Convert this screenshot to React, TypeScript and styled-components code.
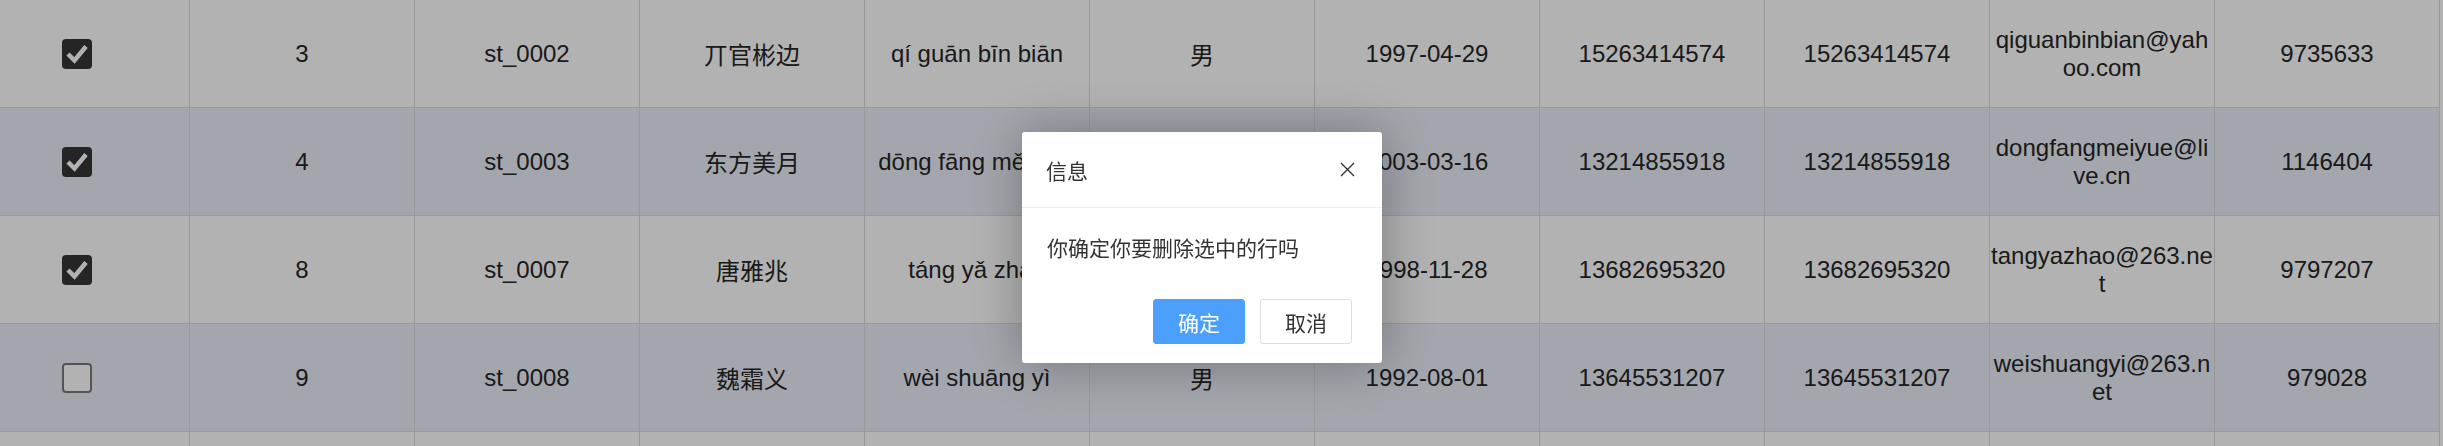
import React from 'react'
import styled, { createGlobalStyle } from 'styled-components'

const GlobalStyle = createGlobalStyle`
html, body {
    margin: 0;
    padding: 0;
    background: #fff;
    overflow: hidden;
}
body {
    font-family: "Liberation Sans", Arial, "Noto Sans CJK SC", sans-serif;
    color: #262626;
}
`;

interface Student {
    id: number;
    code: string;
    name: string;
    pinyin: string;
    gender: string;
    birthday: string;
    phone: string;
    mobile: string;
    email: string;
    qq: string;
    checked: boolean;
}

const students: Student[] = [
    { id: 3, code: 'st_0002', name: '丌官彬边', pinyin: 'qí guān bīn biān', gender: '男', birthday: '1997-04-29', phone: '15263414574', mobile: '15263414574', email: 'qiguanbinbian@yahoo.com', qq: '9735633', checked: true },
    { id: 4, code: 'st_0003', name: '东方美月', pinyin: 'dōng fāng měi yuè', gender: '女', birthday: '2003-03-16', phone: '13214855918', mobile: '13214855918', email: 'dongfangmeiyue@live.cn', qq: '1146404', checked: true },
    { id: 8, code: 'st_0007', name: '唐雅兆', pinyin: 'táng yǎ zhào', gender: '女', birthday: '1998-11-28', phone: '13682695320', mobile: '13682695320', email: 'tangyazhao@263.net', qq: '9797207', checked: true },
    { id: 9, code: 'st_0008', name: '魏霜义', pinyin: 'wèi shuāng yì', gender: '男', birthday: '1992-08-01', phone: '13645531207', mobile: '13645531207', email: 'weishuangyi@263.net', qq: '979028', checked: false },
];

const COLUMNS = 11;

const Table = styled.div`
display: flex;
flex-direction: column;
width: 2440px;
`;

const Row = styled.div<{ $striped: boolean }>`
display: grid;
grid-template-columns: 190px repeat(10, 225px);
height: 108px;
box-sizing: border-box;
border-bottom: 1px solid #dcdcdc;
background: ${p => (p.$striped ? '#eaeff8' : '#fff')};
`;

const Cell = styled.div`
display: flex;
align-items: center;
justify-content: center;
box-sizing: border-box;
padding: 0 1px;
border-right: 1px solid #dcdcdc;
font-size: 24px;
text-align: center;
word-break: break-all;
`;

const CheckCell = styled(Cell)`
justify-content: flex-start;
padding-left: 62px;
`;

const CheckBox = styled.span<{ $checked: boolean }>`
display: inline-flex;
align-items: center;
justify-content: center;
width: 30px;
height: 30px;
box-sizing: border-box;
border-radius: 4px;
background: ${p => (p.$checked ? '#363636' : '#fff')};
border: ${p => (p.$checked ? 'none' : '2px solid #7a7a7a')};
`;

const Mask = styled.div`
position: fixed;
inset: 0;
background: rgba(0, 0, 0, 0.3);
`;

const Dialog = styled.div`
position: fixed;
left: 1022px;
top: 132px;
width: 360px;
background: #fff;
border-radius: 3px;
box-shadow: 1px 1px 50px rgba(0, 0, 0, 0.3);
font-family: "Liberation Sans", "Noto Sans CJK SC", sans-serif;
color: #333;
`;

const DialogTitle = styled.div`
display: flex;
align-items: center;
justify-content: space-between;
height: 76px;
box-sizing: border-box;
padding: 0 27px 0 24px;
border-bottom: 1px solid #eee;
font-size: 21px;
`;

const CloseButton = styled.span`
display: inline-flex;
width: 15px;
height: 15px;
cursor: pointer;
`;

const DialogBody = styled.div`
padding: 24px 24px 24px 25px;
font-size: 21px;
line-height: 34px;
`;

const DialogFooter = styled.div`
display: flex;
justify-content: flex-end;
gap: 15px;
padding: 9px 30px 19px;
`;

const DialogButton = styled.button<{ $primary?: boolean }>`
width: 92px;
height: 45px;
box-sizing: border-box;
border-radius: 3px;
border: 1px solid ${p => (p.$primary ? '#4c9ffa' : '#dedede')};
background: ${p => (p.$primary ? '#4c9ffa' : '#fff')};
color: ${p => (p.$primary ? '#fff' : '#333')};
font-family: inherit;
font-size: 21px;
padding: 0;
cursor: pointer;
`;

function Check({ checked }: { checked: boolean }) {
    return (
        <CheckBox $checked={checked}>
            {checked && (
                <svg width="30" height="30" viewBox="0 0 30 30">
                    <polyline points="6,15 12.5,21.5 24,7.5" fill="none" stroke="#fff" strokeWidth="4.5" />
                </svg>
            )}
        </CheckBox>
    )
}

export default function App() {
    return (
        <>
            <GlobalStyle />
            <Table>
                {students.map((s, i) => (
                    <Row key={s.id} $striped={i % 2 === 1}>
                        <CheckCell><Check checked={s.checked} /></CheckCell>
                        <Cell>{s.id}</Cell>
                        <Cell>{s.code}</Cell>
                        <Cell>{s.name}</Cell>
                        <Cell>{s.pinyin}</Cell>
                        <Cell>{s.gender}</Cell>
                        <Cell>{s.birthday}</Cell>
                        <Cell>{s.phone}</Cell>
                        <Cell>{s.mobile}</Cell>
                        <Cell>{s.email}</Cell>
                        <Cell>{s.qq}</Cell>
                    </Row>
                ))}
                {/* next row, scrolled past the bottom edge */}
                <Row $striped={false}>
                    {Array.from({ length: COLUMNS }, (_, i) => <Cell key={i} />)}
                </Row>
            </Table>
            <Mask />
            <Dialog>
                <DialogTitle>
                    <span>信息</span>
                    <CloseButton>
                        <svg width="15" height="15" viewBox="0 0 15 15">
                            <path d="M1 1L14 14M14 1L1 14" stroke="#333" strokeWidth="1.4" />
                        </svg>
                    </CloseButton>
                </DialogTitle>
                <DialogBody>你确定你要删除选中的行吗</DialogBody>
                <DialogFooter>
                    <DialogButton $primary>确定</DialogButton>
                    <DialogButton>取消</DialogButton>
                </DialogFooter>
            </Dialog>
        </>
    )
}
